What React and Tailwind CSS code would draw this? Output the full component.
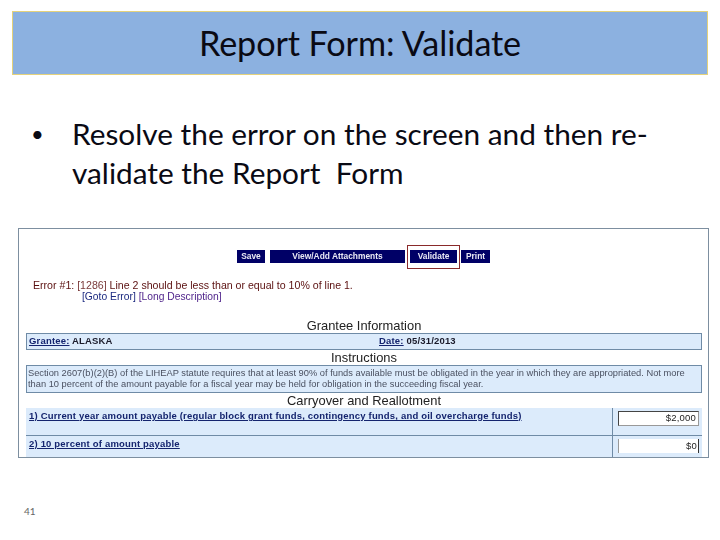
function Btn({ children, className = '' }) {
  return (
    <div className={`flex h-[13px] items-center justify-center bg-[#000066] text-[8.4px] font-bold text-[#e8e8f4] ${className}`}>
      {children}
    </div>
  );
}

function SectionTitle({ children, className = '' }) {
  return <p className={`text-center text-[12.9px] leading-[13px] text-[#222] ${className}`}>{children}</p>;
}

export default function App() {
  return (
    <div className="h-[540px] w-[720px] overflow-hidden bg-white font-['Lato',sans-serif] text-[#0a0a14]">
      <div className="px-3 pt-[11px]">
        <div className="flex h-[64px] w-[696px] items-center justify-center border border-[#e4d27c] bg-[#8cb1e0] text-[34.2px] tracking-[-0.1px]">
          Report Form: Validate
        </div>
      </div>

      <div className="flex pl-[31px] pt-[39px] text-[29.8px] leading-[39px]">
        <span className="w-[41px] shrink-0 text-[22px]">•</span>
        <p className="w-[610px]">
          Resolve the error on the screen and then re-
          <br />
          validate the Report&nbsp; Form
        </p>
      </div>

      <div className="ml-[18px] mt-[36px] h-[230px] w-[691px] border border-[#7d8fa0] font-['Liberation_Sans',sans-serif] blur-[0.3px]">
        <div className="flex justify-start gap-[5px] pl-[218px] pt-[21px]">
          <Btn className="w-[28px]">Save</Btn>
          <Btn className="w-[135px]">View/Add Attachments</Btn>
          <div className="relative">
            <Btn className="w-[47px]">Validate</Btn>
            <div className="absolute -inset-x-[3px] -inset-y-[5.5px] border-[1.5px] border-[#8a2a2a]" />
          </div>
          <Btn className="-ml-[1px] w-[29px]">Print</Btn>
        </div>

        <div className="pl-[14px] pt-[17px] text-[10.6px] leading-[11px] text-[#5a0f0f]">
          <p>
            Error #1: <span className="text-[#7a3a3a]">[1286]</span> Line 2 should be less than or equal to 10% of line 1.
          </p>
          <p className="pl-[49px] text-[10.3px] text-[#1c2a80]">
            [Goto Error] <span className="text-[#4b1f88]">[Long Description]</span>
          </p>
        </div>

        <div className="pl-[7px] pr-[6px] pt-[17px]">
          <SectionTitle>Grantee Information</SectionTitle>
          <div className="mt-[1px] flex h-[17px] items-center border border-[#6f8ba6] bg-[#dcebfb] pl-[2px] text-[9.5px] font-bold tracking-[0.18px] text-[#1a1a2a]">
            <span className="w-[349px]">
              <span className="text-[#14246e] underline">Grantee:</span> ALASKA
            </span>
            <span className="pl-[1px]">
              <span className="text-[#14246e] underline">Date:</span> 05/31/2013
            </span>
          </div>

          <SectionTitle className="mt-[1px] pb-[1px]">Instructions</SectionTitle>
          <div className="h-[28px] border border-[#6f8ba6] bg-[#dcebfb] pl-px pt-[2px] text-[9.3px] leading-[11px] text-[#4a5060]">
            Section 2607(b)(2)(B) of the LIHEAP statute requires that at least 90% of funds available must be obligated in the year in which they are appropriated. Not more
            <br />
            than 10 percent of the amount payable for a fiscal year may be held for obligation in the succeeding fiscal year.
          </div>

          <SectionTitle className="pb-[1px] pt-[1px]">Carryover and Reallotment</SectionTitle>

          <div className="bg-[#dcebfb] text-[9.5px] font-bold tracking-[0.18px] text-[#14246e]">
            <div className="flex h-[28px] border-b border-[#6f8ba6]">
              <div className="w-[586px] pl-[3px] pt-[1px] underline">
                1) Current year amount payable (regular block grant funds, contingency funds, and oil overcharge funds)
              </div>
              <div className="flex-1 border-l border-[#6f8ba6] pl-[5px] pt-[3px]">
                <div className="flex h-[15px] w-[81px] items-center justify-end border border-[#444] border-r-[#999] border-b-[#999] bg-white pr-[2px] font-normal text-[#222]">
                  $2,000
                </div>
              </div>
            </div>
            <div className="flex h-[21px]">
              <div className="w-[586px] pl-[3px] pt-[1px] underline">2) 10 percent of amount payable</div>
              <div className="flex-1 border-l border-[#6f8ba6] pl-[5px] pt-[3px]">
                <div className="flex h-[14px] w-[81px] items-center justify-end border-l border-r border-l-[#999] border-r-[#333] bg-white pr-[1px] font-normal text-[#222]">
                  $0
                </div>
              </div>
            </div>
          </div>
        </div>
      </div>

      <p className="pl-[24px] pt-[47px] font-['Lato',sans-serif] text-[10px] leading-[12px] text-[#666]">41</p>
    </div>
  );
}
